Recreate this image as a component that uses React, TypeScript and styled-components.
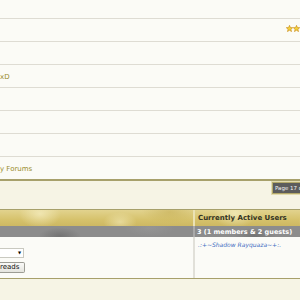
import styled, { createGlobalStyle } from 'styled-components';

const GlobalStyle = createGlobalStyle`
  html, body {
    margin: 0;
    padding: 0;
    background: #f6f4e5;
  }
  body {
    font-family: "DejaVu Sans", Verdana, sans-serif;
    width: 300px;
    height: 300px;
    overflow: hidden;
  }
`;

const threads = [
  { text: '', stars: false, top: true },
  { text: '', stars: true },
  { text: '', stars: false },
  { text: 'xD', stars: false },
  { text: '', stars: false },
  { text: '', stars: false },
  { text: '', stars: false },
  { text: 'y Forums', stars: false, last: true },
];

const Star = () => (
  <svg width="7" height="7" viewBox="0 0 10 10">
    <polygon
      points="5,0.5 6.3,3.6 9.6,3.8 7,6 7.9,9.4 5,7.5 2.1,9.4 3,6 0.4,3.8 3.7,3.6"
      fill="#f4d23c"
      stroke="#c98a1a"
      strokeWidth="0.9"
    />
  </svg>
);

const App = () => {
  return (
    <Page>
      <GlobalStyle />
      <ThreadList>
        {threads.map((t, i) => (
          <ThreadRow key={i} $top={t.top} $last={t.last}>
            <ThreadTitle>{t.text}</ThreadTitle>
            {t.stars && (
              <Rating>
                <Star />
                <Star />
                <Star />
              </Rating>
            )}
          </ThreadRow>
        ))}
      </ThreadList>

      <PagerBar>
        <PageBox>Page 17 of 17</PageBox>
      </PagerBar>

      <InfoTable>
        <HeaderCell />
        <HeaderCell $divider>Currently Active Users</HeaderCell>
        <SubCell />
        <SubCell $divider>3 (1 members &amp; 2 guests)</SubCell>
        <BodyCell>
          <FakeSelect>
            <Arrow>▼</Arrow>
          </FakeSelect>
          <ShowButton>reads</ShowButton>
        </BodyCell>
        <BodyCell $divider>
          <UserLink href="#">.:+~Shadow Rayquaza~+:.</UserLink>
        </BodyCell>
      </InfoTable>
    </Page>
  );
};

const Page = styled.div`
  width: 300px;
  overflow: hidden;
`;

const ThreadList = styled.div`
  display: flex;
  flex-direction: column;
  border-bottom: 2px solid #a7a06b;
  background: #fbfbf6;
`;

const ThreadRow = styled.div<{ $top?: boolean; $last?: boolean }>`
  height: ${p => (p.$top ? '18px' : '22px')};
  display: flex;
  align-items: center;
  justify-content: space-between;
  border-bottom: ${p => (p.$last ? 'none' : '1px solid #dedcd3')};
  background: #fbfbf6;
`;

const ThreadTitle = styled.span`
  font-size: 7px;
  color: #9a8c2e;
  white-space: nowrap;
  padding-top: 1px;
`;

const Rating = styled.div`
  display: flex;
  width: 14px;
  overflow: hidden;
  margin-bottom: 3px;
  flex-shrink: 0;

  svg {
    flex-shrink: 0;
  }
`;

const PagerBar = styled.div`
  height: 27px;
  background: #f6f4e5;
  display: flex;
  align-items: flex-start;
  padding-top: 1px;
  overflow: hidden;
`;

const PageBox = styled.div`
  margin-left: 272px;
  flex-shrink: 0;
  white-space: nowrap;
  height: 10px;
  line-height: 10px;
  padding: 0 2px;
  background: #5c5c5c;
  border: 1px solid #b4a96a;
  outline: 1px solid #e3dcb0;
  color: #f4f4f4;
  font-size: 5.5px;
`;

const InfoTable = styled.div`
  display: grid;
  grid-template-columns: 193px 1fr;
  grid-template-rows: 16px 11px 41px;
  border-top: 1px solid #a7a06b;
  border-bottom: 1px solid #a7a06b;
  box-shadow: 0 1px 0 #fffdf0;
`;

const HeaderCell = styled.div<{ $divider?: boolean }>`
  background:
    radial-gradient(ellipse 30px 20px at 40px 4px, rgba(255, 250, 215, 0.55), transparent 70%),
    radial-gradient(ellipse 24px 14px at 120px 12px, rgba(255, 250, 215, 0.45), transparent 70%),
    radial-gradient(ellipse 40px 16px at 170px 2px, rgba(190, 165, 70, 0.45), transparent 70%),
    linear-gradient(180deg, #e2d38e 0%, #d6c26c 60%, #cdb862 100%);
  border-left: ${p => (p.$divider ? '2px solid #ebe2b4' : 'none')};
  padding-left: 3px;
  display: flex;
  align-items: center;
  font-size: 7px;
  font-weight: bold;
  color: #333324;
  white-space: nowrap;
`;

const SubCell = styled.div<{ $divider?: boolean }>`
  background:
    radial-gradient(ellipse 30px 12px at 60px 10px, rgba(70, 70, 70, 0.35), transparent 70%),
    radial-gradient(ellipse 36px 12px at 150px 2px, rgba(160, 160, 160, 0.4), transparent 70%),
    #8c8c8c;
  border-left: ${p => (p.$divider ? '2px solid #a9a9a9' : 'none')};
  padding-left: 2px;
  display: flex;
  align-items: center;
  font-size: 6.5px;
  font-weight: bold;
  color: #ffffff;
  white-space: nowrap;
`;

const BodyCell = styled.div<{ $divider?: boolean }>`
  background: #fbfbf7;
  border-left: ${p => (p.$divider ? '2px solid #e1e0d9' : 'none')};
  padding: ${p => (p.$divider ? '4px 0 0 3px' : '11px 0 0 0')};
  display: flex;
  flex-direction: column;
  align-items: flex-start;
  gap: 4px;
`;

const FakeSelect = styled.div`
  width: 21px;
  height: 8px;
  background: #ffffff;
  border: 1px solid #c9c9c0;
  border-left: none;
  display: flex;
  justify-content: flex-end;
  align-items: center;
  padding-right: 2px;
  box-sizing: content-box;
`;

const Arrow = styled.span`
  font-size: 4px;
  color: #000;
  line-height: 1;
`;

const ShowButton = styled.button`
  height: 11px;
  padding: 0 5px 0 0;
  margin: 0;
  border: 1px solid #9c9c94;
  border-left: none;
  border-radius: 0 2px 2px 0;
  background: linear-gradient(180deg, #fafaf8, #e4e4de);
  font-family: "DejaVu Sans", Verdana, sans-serif;
  font-size: 7px;
  color: #111;
  line-height: 9px;
`;

const UserLink = styled.a`
  font-size: 6px;
  font-style: italic;
  color: #3d6dc2;
  text-decoration: none;
  white-space: nowrap;
`;

export default App;
